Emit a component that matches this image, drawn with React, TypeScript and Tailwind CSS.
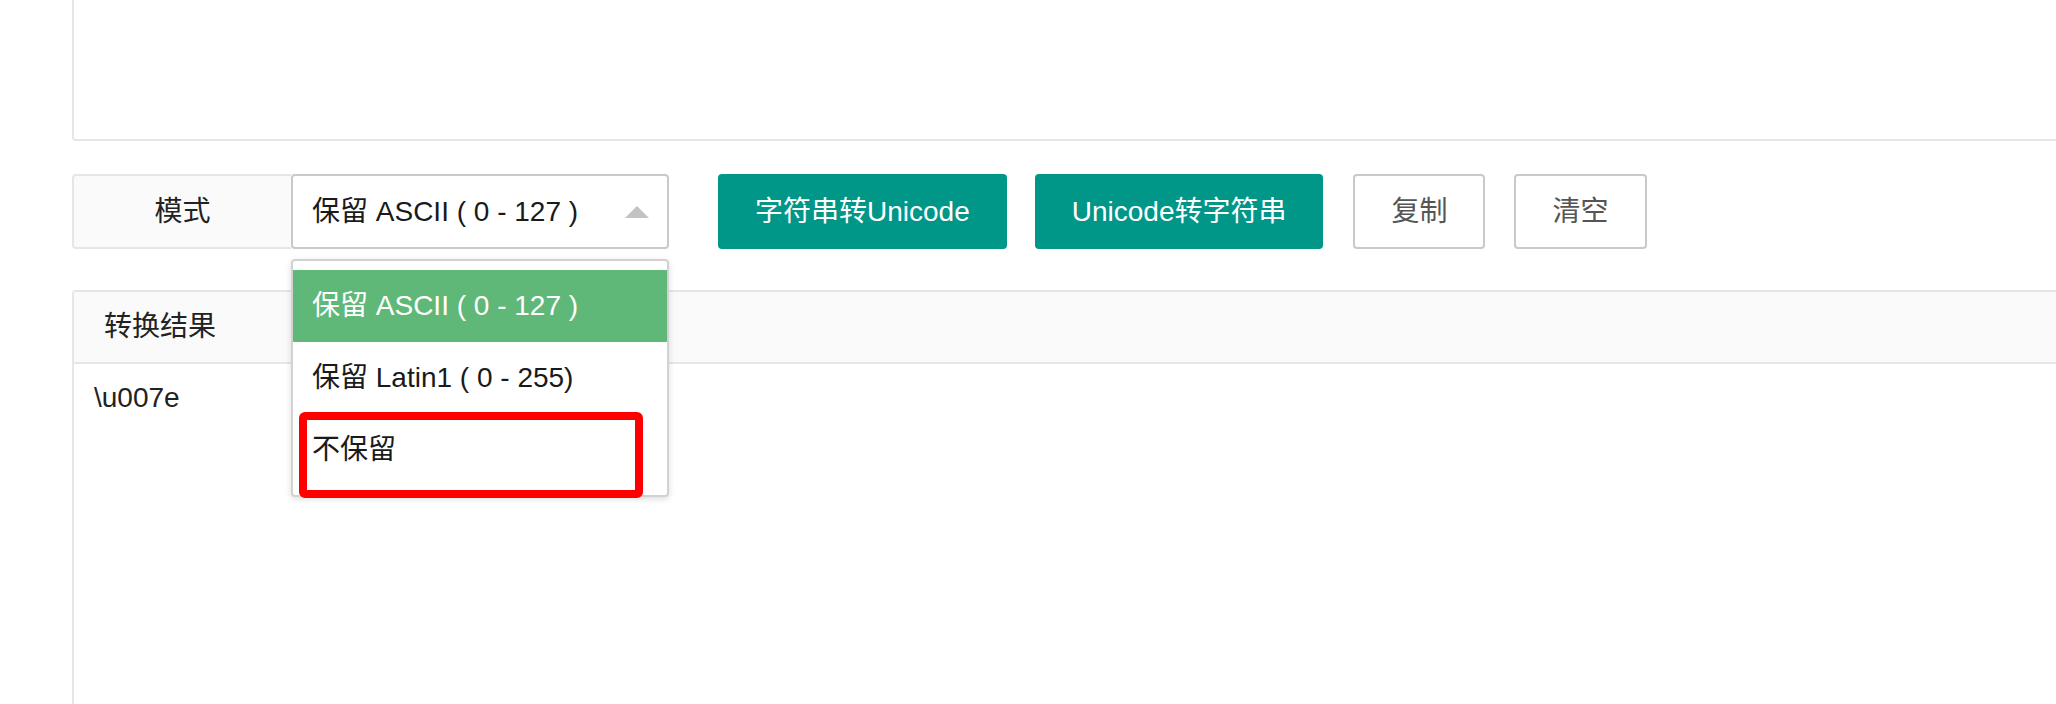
// Unicode converter - mode row with open select dropdown

const options = ['保留 ASCII ( 0 - 127 )', '保留 Latin1 ( 0 - 255)', '不保留']

function ModeSelect() {
  return (
    <div className="relative h-full w-[378px] rounded-[4px] border-2 border-[#c9c9c9] bg-white">
      <div className="flex h-full items-center pl-[19px] text-[#1a1a1a]">{options[0]}</div>
      {/* caret (open state) */}
      <span className="absolute right-[18px] top-[30px] h-0 w-0 border-x-[12px] border-b-[12px] border-x-transparent border-b-[#c2c2c2]" />

      {/* Dropdown */}
      <div className="absolute left-[-2px] top-[83px] z-10 w-[378px] rounded-[4px] border-2 border-[#d2d2d2] bg-white py-[9px] shadow-[0_2px_6px_rgba(0,0,0,0.14)]">
        {options.map((opt, i) => (
          <div
            key={opt}
            className={
              i === 0
                ? 'flex h-[72px] items-center bg-[#5fb878] px-[19px] text-white'
                : 'flex h-[72px] items-center px-[19px] text-[#1a1a1a]'
            }
          >
            {opt}
          </div>
        ))}
        {/* annotation box */}
        <div className="absolute left-[6px] top-[151px] h-[86px] w-[344px] rounded-[6px] border-[8px] border-[#ff0000]" />
      </div>
    </div>
  )
}

export default function App() {
  return (
    <div className="h-[704px] w-[2056px] overflow-hidden bg-white font-['Liberation_Sans','Noto_Sans_CJK_SC',sans-serif] text-[28px] text-[#222]">
      <div className="pl-[72px]">
        {/* Input textarea (top cut off) */}
        <div className="-mr-10 mt-[-40px] h-[181px] rounded-[4px] border-2 border-[#e6e6e6] bg-white" />

        {/* Mode row */}
        <div className="mt-[33px] flex h-[75px] items-stretch">
          <div className="flex w-[219px] items-center justify-center rounded-l-[4px] border-2 border-r-0 border-[#e6e6e6] bg-[#fafafa]">
            模式
          </div>
          <ModeSelect />

          <button className="ml-[49px] rounded-[4px] border-2 border-transparent bg-[#009688] px-[35px] text-white">
            字符串转Unicode
          </button>
          <button className="ml-[28px] rounded-[4px] border-2 border-transparent bg-[#009688] px-[35px] text-white">
            Unicode转字符串
          </button>
          <button className="ml-[30px] rounded-[4px] border-2 border-[#c9c9c9] bg-white px-[36px] text-[#555]">
            复制
          </button>
          <button className="ml-[29px] rounded-[4px] border-2 border-[#c9c9c9] bg-white px-[36px] text-[#555]">
            清空
          </button>
        </div>

        {/* Result panel */}
        <div className="-mr-10 mt-[41px] h-[500px] rounded-t-[4px] border-2 border-[#e6e6e6] bg-white">
          <div className="flex h-[72px] items-center border-b-2 border-[#e6e6e6] bg-[#fafafa] pl-[30px]">
            转换结果
          </div>
          <div className="pl-[20px] pt-[18px] leading-[32px]">\u007e</div>
        </div>
      </div>
    </div>
  )
}
